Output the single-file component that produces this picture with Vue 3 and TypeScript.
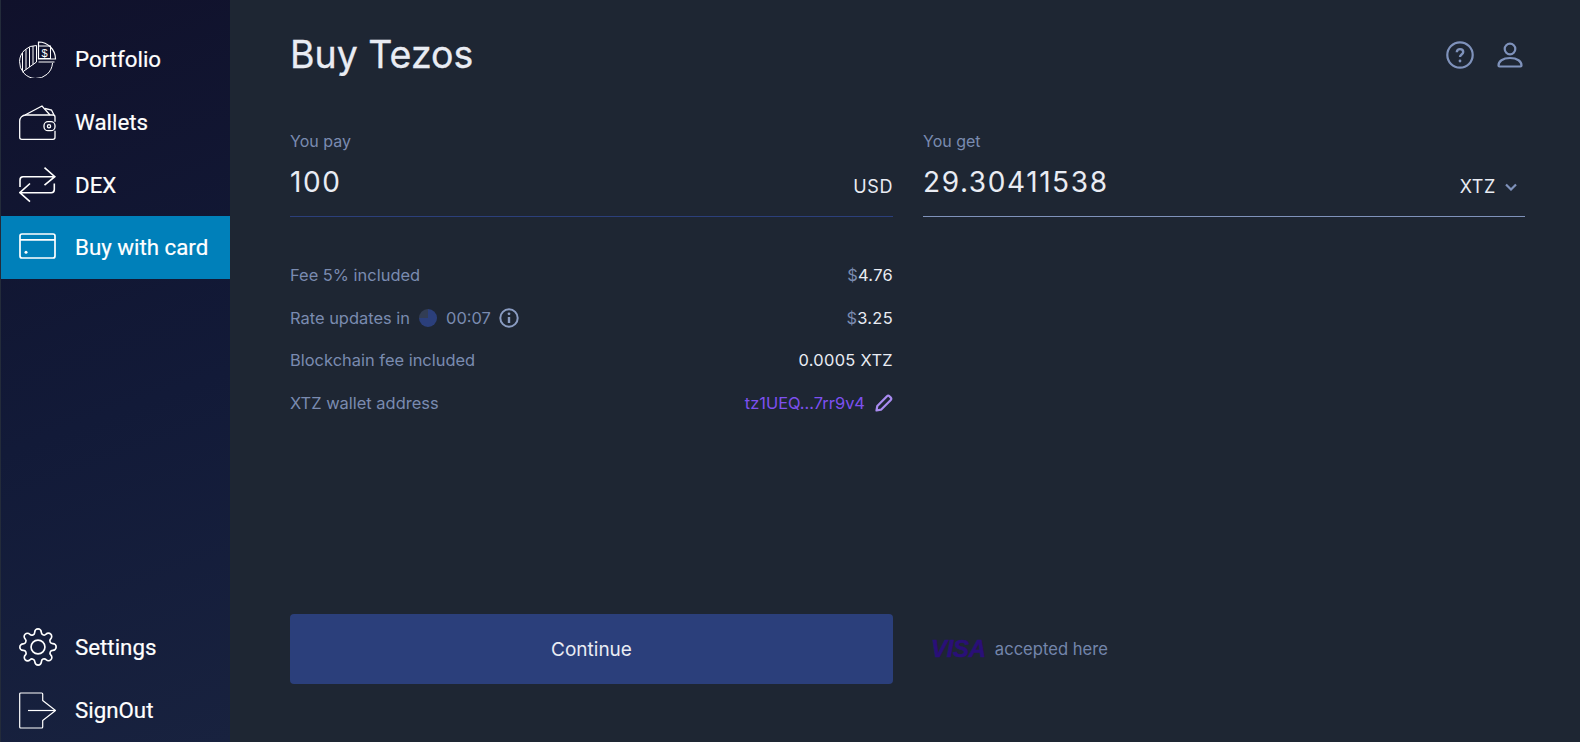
<template>
  <div class="layout">
    <nav class="sidebar">
      <ul class="menu">
        <li v-for="item in topItems" :key="item.label" :class="['menu-item', { active: item.active }]">
          <span class="menu-icon">
            <svg v-if="item.icon === 'portfolio'" viewBox="0 0 38 38" width="38" height="38" fill="none" stroke="#fff" stroke-width="1">
              <path d="M17.500 5.500A16.500 16.500 0 1 0 33.500 23" />
              <path d="M17.500 22L3.500 32" />
              <path d="M3.500 13v18M7 9.500v20M10.500 7.500v19.500M14 6v18.500M17.500 5.500V22" />
              <path d="M19.500 22h16" />
              <path d="M19.500 2A17 17 0 0 1 36.500 19L19.500 19Z" stroke-width="1.200" />
              <rect x="19.500" y="6" width="12" height="12.500" />
              <text x="25.500" y="16.500" text-anchor="middle" class="dollar">$</text>
            </svg>
            <svg v-else-if="item.icon === 'wallet'" viewBox="0 0 38 38" width="38" height="38" fill="none" stroke="#fff" stroke-width="1.300">
              <path d="M36 18.700V14a2 2 0 0 0-2-2H7C3 12 .7 15 .7 18v16.300a2 2 0 0 0 2 2H34a2 2 0 0 0 2-2v-6.600" />
              <path d="M6 12L23 3l8 9" />
              <path d="M26 5.500l6.500 1.500 2.500 5" />
              <rect x="25" y="18.700" width="11" height="9" rx="4" />
              <circle cx="30" cy="23.200" r="1.600" />
            </svg>
            <svg v-else-if="item.icon === 'dex'" viewBox="0 0 38 38" width="38" height="38" fill="none" stroke="#fff" stroke-width="1.600">
              <path d="M1 21v-7c0-2 1-3.300 3-3.300h31.500M25.500 1.700l10.300 9-10.300 8.500" />
              <path d="M35.300 17.500v6c0 2-1 3.200-3 3.200H1M11 17.500L.8 26.700l10.200 9" />
            </svg>
            <svg v-else viewBox="0 0 38 38" width="38" height="38" fill="none" stroke="#fff" stroke-width="1.700">
              <rect x="1" y="6" width="35" height="24" rx="2" />
              <path d="M1 11.800h35" />
              <circle cx="7" cy="24.300" r="1.500" fill="#fff" stroke="none" />
            </svg>
          </span>
          <span>{{ item.label }}</span>
        </li>
      </ul>
      <ul class="menu">
        <li v-for="item in bottomItems" :key="item.label" class="menu-item">
          <span class="menu-icon">
            <svg v-if="item.icon === 'settings'" viewBox="0.500 0.500 23 23" width="38" height="38" fill="none" stroke="#fff" stroke-width="1">
              <circle cx="12" cy="12" r="4.200" />
              <path d="M19.400 15a1.650 1.650 0 0 0 .33 1.820l.06.06a2 2 0 0 1 0 2.830 2 2 0 0 1-2.830 0l-.06-.06a1.650 1.650 0 0 0-1.820-.33 1.650 1.650 0 0 0-1 1.510V21a2 2 0 0 1-2 2 2 2 0 0 1-2-2v-.09A1.650 1.650 0 0 0 9 19.400a1.650 1.650 0 0 0-1.820.33l-.06.06a2 2 0 0 1-2.830 0 2 2 0 0 1 0-2.830l.06-.06a1.650 1.650 0 0 0 .33-1.820 1.650 1.650 0 0 0-1.510-1H3a2 2 0 0 1-2-2 2 2 0 0 1 2-2h.09A1.650 1.650 0 0 0 4.600 9a1.650 1.650 0 0 0-.33-1.820l-.06-.06a2 2 0 0 1 0-2.830 2 2 0 0 1 2.830 0l.06.06a1.650 1.650 0 0 0 1.820.33H9a1.650 1.650 0 0 0 1-1.510V3a2 2 0 0 1 2-2 2 2 0 0 1 2 2v.09a1.650 1.650 0 0 0 1 1.510 1.650 1.650 0 0 0 1.820-.33l.06-.06a2 2 0 0 1 2.830 0 2 2 0 0 1 0 2.830l-.06.06a1.650 1.650 0 0 0-.33 1.820V9a1.650 1.650 0 0 0 1.510 1H21a2 2 0 0 1 2 2 2 2 0 0 1-2 2h-.09a1.650 1.650 0 0 0-1.510 1z" />
            </svg>
            <svg v-else viewBox="0 0 38 38" width="38" height="38" fill="none" stroke="#fff" stroke-width="1.200" stroke-linejoin="round">
              <path d="M23.700 9.500L36.500 19.500 23.700 29.500V36a1 1 0 0 1-1 1H1.700a1 1 0 0 1-1-1V3a1 1 0 0 1 1-1h21a1 1 0 0 1 1 1z" />
              <path d="M9 19.500h27" />
            </svg>
          </span>
          <span>{{ item.label }}</span>
        </li>
      </ul>
    </nav>

    <main class="content">
      <header class="page-header">
        <h1 class="title">Buy Tezos</h1>
        <div class="header-icons">
          <svg viewBox="0 0 28 28" width="28" height="28" fill="none" stroke="#7f92bb" stroke-width="2.200">
            <circle cx="14" cy="14" r="12.700" />
            <path d="M10.800 11.200c0-1.900 1.400-3.100 3.200-3.100s3.200 1.200 3.200 2.900c0 2.500-3.200 2.500-3.200 5" stroke-width="2.400" />
            <circle cx="14" cy="20" r="1.400" fill="#7f92bb" stroke="none" />
          </svg>
          <svg viewBox="0 0 28 28" width="28" height="28" fill="none" stroke="#7f92bb" stroke-width="2.200" stroke-linejoin="round">
            <circle cx="15" cy="8" r="5.300" />
            <path d="M3.500 24.500c0-4 4-7.500 11.500-7.500s11.500 3.500 11.500 7.500c0 .6-.4 1-1 1h-21c-.6 0-1-.4-1-1z" />
          </svg>
        </div>
      </header>

      <section class="columns inputs">
        <div class="field">
          <label class="field-label">You pay</label>
          <div class="field-row dim">
            <span class="field-value">100</span>
            <span class="currency">USD</span>
          </div>
        </div>
        <div class="field">
          <label class="field-label">You get</label>
          <div class="field-row">
            <span class="field-value">29.30411538</span>
            <span class="currency select">
              XTZ
              <svg viewBox="0 0 12 8" width="12" height="8" fill="none" stroke="#7f92bb" stroke-width="2.200"><path d="M1 1.500l5 5 5-5" /></svg>
            </span>
          </div>
        </div>
      </section>

      <section class="columns details">
        <div class="rows">
          <div class="row">
            <span>Fee 5% included</span>
            <span class="amount"><i>$</i>4.76</span>
          </div>
          <div class="row">
            <span class="rate">
              Rate updates in
              <span class="pie"></span>
              00:07
              <svg viewBox="0 0 20 20" width="20" height="20" fill="none" stroke="#8a9cc2" stroke-width="2">
                <circle cx="10" cy="10" r="8.700" />
                <path d="M10 9v6" stroke-width="2.400" />
                <circle cx="10" cy="5.800" r="1.400" fill="#8a9cc2" stroke="none" />
              </svg>
            </span>
            <span class="amount"><i>$</i>3.25</span>
          </div>
          <div class="row">
            <span>Blockchain fee included</span>
            <span class="amount">0.0005 XTZ</span>
          </div>
          <div class="row">
            <span>XTZ wallet address</span>
            <span class="address">
              tz1UEQ...7rr9v4
              <svg viewBox="0 0 18 18" width="18" height="18" fill="none" stroke="#a98bf0" stroke-width="2.200" stroke-linejoin="round">
                <path d="M1.500 16.500l.8-4.500L12 2.200c.7-.7 1.700-.7 2.400 0l1.400 1.400c.7.7.7 1.700 0 2.400L6 15.700z" />
              </svg>
            </span>
          </div>
        </div>
        <div></div>
      </section>

      <section class="columns footer">
        <button class="continue" type="button">Continue</button>
        <div class="accepted">
          <span class="visa">VISA</span>
          <span>accepted here</span>
        </div>
      </section>
    </main>
  </div>
</template>

<script setup lang="ts">
interface MenuItem {
  label: string
  icon: string
  active?: boolean
}

const topItems: MenuItem[] = [
  { label: 'Portfolio', icon: 'portfolio' },
  { label: 'Wallets', icon: 'wallet' },
  { label: 'DEX', icon: 'dex' },
  { label: 'Buy with card', icon: 'card', active: true }
]

const bottomItems: MenuItem[] = [
  { label: 'Settings', icon: 'settings' },
  { label: 'SignOut', icon: 'signout' }
]
</script>

<style>
html,
body {
  margin: 0;
  background: #1e2633;
}
</style>

<style scoped>
.layout {
  display: flex;
  width: 1580px;
  height: 742px;
  overflow: hidden;
  background: #1e2633;
  font-family: Inter, 'Liberation Sans', sans-serif;
}

.sidebar {
  box-sizing: border-box;
  width: 230px;
  flex-shrink: 0;
  padding: 28px 0 1px 0;
  display: flex;
  flex-direction: column;
  justify-content: space-between;
  background: linear-gradient(160deg, #10112b 0%, #121a38 55%, #18223f 100%);
  border-left: 1px solid #232b3a;
  font-family: Roboto, sans-serif;
}

.menu {
  list-style: none;
  margin: 0;
  padding: 0;
}

.menu-item {
  height: 62.670px;
  display: flex;
  align-items: center;
  padding-left: 18px;
  color: #fff;
  font-size: 22.300px;
  font-weight: 400;
  -webkit-text-stroke: 0.200px #fff;
}

.menu-item.active {
  background: #0080ba;
}

.menu-icon {
  width: 38px;
  height: 38px;
  margin-right: 18px;
  flex-shrink: 0;
}

.menu-icon svg {
  display: block;
}

.dollar {
  font-family: 'Liberation Sans', sans-serif;
  font-size: 11px;
  fill: #fff;
  stroke: none;
  font-weight: 400;
  -webkit-text-stroke: 0;
}

.content {
  flex: 1;
  display: flex;
  flex-direction: column;
  padding: 0 55px 58px 60px;
}

.page-header {
  display: flex;
  justify-content: space-between;
  align-items: center;
  height: 110px;
}

.title {
  margin: 0;
  color: #e9ecf3;
  font-size: 37.500px;
  font-weight: 400;
  line-height: 1;
  -webkit-text-stroke: 0.300px #e9ecf3;
}

.header-icons {
  display: flex;
  gap: 21px;
  margin-right: 2px;
}

.columns {
  display: grid;
  grid-template-columns: 603px 602px;
  column-gap: 30px;
}

.inputs {
  margin-top: 20px;
}

.field-label {
  display: block;
  color: #7a8bb0;
  font-size: 16px;
  line-height: 22px;
}

.field-row {
  display: flex;
  justify-content: space-between;
  align-items: flex-end;
  height: 56px;
  padding-bottom: 17px;
  box-sizing: border-box;
  border-bottom: 1px solid #7f92bb;
  margin-top: 9px;
}

.field-row.dim {
  border-bottom-color: #2b3f7b;
}

.field-value {
  color: #e9ecf3;
  font-size: 28px;
  line-height: 34px;
  letter-spacing: 1.600px;
}

.currency {
  color: #e9ecf3;
  font-size: 18px;
  line-height: 24px;
  letter-spacing: 0.600px;
}

.select {
  display: flex;
  align-items: center;
  gap: 9px;
  padding-right: 8px;
}

.details {
  flex: 1;
  margin-top: 37px;
}

.rows {
  display: flex;
  flex-direction: column;
}

.row {
  height: 42.600px;
  display: flex;
  justify-content: space-between;
  align-items: center;
  color: #7a8bb0;
  font-size: 16.450px;
}

.rate {
  display: flex;
  align-items: center;
  gap: 8px;
}

.pie {
  width: 18px;
  height: 18px;
  border-radius: 50%;
  margin: 0 1px;
  background: conic-gradient(#2b3f7b 0 75%, #323d54 75% 100%);
}

.amount {
  color: #e9ecf3;
  letter-spacing: 0.300px;
}

.amount i {
  font-style: normal;
  color: #7a8bb0;
}

.address {
  display: flex;
  align-items: center;
  gap: 10px;
  color: #7d50f0;
}

.footer {
  align-items: center;
}

.continue {
  height: 70px;
  border: 0;
  border-radius: 4px;
  background: #2b3f7b;
  color: #e9ecf3;
  font-family: inherit;
  font-size: 19px;
  font-weight: 400;
}

.accepted {
  display: flex;
  align-items: center;
  gap: 9px;
  padding-left: 8px;
  color: #7385ab;
  font-size: 16.600px;
}

.visa {
  color: #2a0f78;
  font-family: 'Liberation Sans', sans-serif;
  font-size: 24px;
  font-weight: 700;
  font-style: italic;
  letter-spacing: -0.300px;
  -webkit-text-stroke: 0.500px #2a0f78;
}
</style>
